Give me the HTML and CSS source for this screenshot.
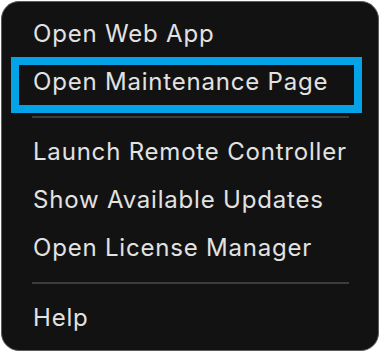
FILE: index.html
```html
<!DOCTYPE html>
<html>
<head>
<meta charset="utf-8">
<link rel="stylesheet" href="styles.css">
</head>
<body>
<div class="menu">
  <div class="item">Open Web App</div>
  <div class="item">Open Maintenance Page</div>
  <div class="sep"></div>
  <div class="item">Launch Remote Controller</div>
  <div class="item">Show Available Updates</div>
  <div class="item">Open License Manager</div>
  <div class="sep"></div>
  <div class="item">Help</div>
  <div class="highlight"></div>
</div>
</body>
</html>
```
FILE: styles.css
```css
html, body {
  margin: 0;
  padding: 0;
  background: #ffffff;
}
body {
  width: 380px;
  height: 352px;
  overflow: hidden;
}
.menu {
  position: relative;
  box-sizing: border-box;
  margin: 1px;
  width: 378px;
  height: 350px;
  background: #121212;
  border: 1.5px solid #5c5c5c;
  border-radius: 18px;
  padding-top: 8px;
  font-family: Inter, "Noto Sans", sans-serif;
  font-size: 24px;
  letter-spacing: 0.8px;
  color: #e2e2e2;
}
.item {
  height: 48px;
  line-height: 48px;
  padding-left: 31px;
  white-space: nowrap;
}
.sep {
  height: 2px;
  background: #3c3c3c;
  margin: 10px 29px 10px 30px;
}
.highlight {
  position: absolute;
  left: 8.5px;
  top: 54.5px;
  width: 351px;
  height: 56px;
  box-sizing: border-box;
  border: 8px solid #04a2e6;
}
```
